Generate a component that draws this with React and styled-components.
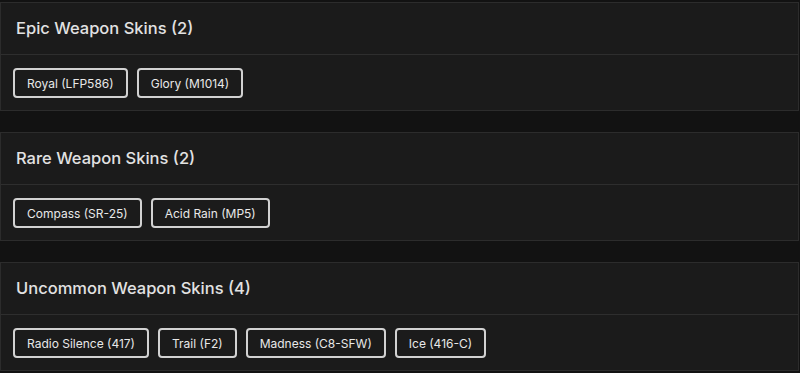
import React from 'react';
import styled, { createGlobalStyle } from 'styled-components';

const GlobalStyle = createGlobalStyle`
  html, body {
    margin: 0;
    padding: 0;
    background: #121212;
  }
  body {
    font-family: Inter, "Open Sans", sans-serif;
    color: #e6e6e6;
  }
`;

const Page = styled.div`
  display: flex;
  flex-direction: column;
  gap: 21px;
  padding-top: 2px;
  width: 799px;
`;

const Card = styled.section`
  background: #1b1b1b;
  border: 1px solid #2c2c2c;
`;

const Header = styled.h3`
  margin: 0;
  height: 52px;
  box-sizing: border-box;
  display: flex;
  align-items: center;
  padding: 0 15px 2px;
  font-size: 16.5px;
  font-weight: 500;
  color: #e2e2e2;
  border-bottom: 1px solid #2e2e2e;
`;

const Body = styled.div`
  display: flex;
  flex-wrap: wrap;
  gap: 9px;
  padding: 13px 12px 12px;
`;

const Tag = styled.button`
  height: 30px;
  padding: 0 12px;
  background: #1b1b1b;
  border: 2px solid #d2d2d2;
  border-radius: 4px;
  color: #e8e8e8;
  font-family: Inter, "Open Sans", sans-serif;
  font-size: 12px;
  font-weight: 400;
  cursor: pointer;
`;

const groups = [
  { title: 'Epic Weapon Skins (2)', skins: ['Royal (LFP586)', 'Glory (M1014)'] },
  { title: 'Rare Weapon Skins (2)', skins: ['Compass (SR-25)', 'Acid Rain (MP5)'] },
  {
    title: 'Uncommon Weapon Skins (4)',
    skins: ['Radio Silence (417)', 'Trail (F2)', 'Madness (C8-SFW)', 'Ice (416-C)'],
  },
];

export default function App() {
  return (
    <>
      <GlobalStyle />
      <Page>
        {groups.map(g => (
          <Card key={g.title}>
            <Header>{g.title}</Header>
            <Body>
              {g.skins.map(s => (
                <Tag key={s}>{s}</Tag>
              ))}
            </Body>
          </Card>
        ))}
      </Page>
    </>
  );
}
